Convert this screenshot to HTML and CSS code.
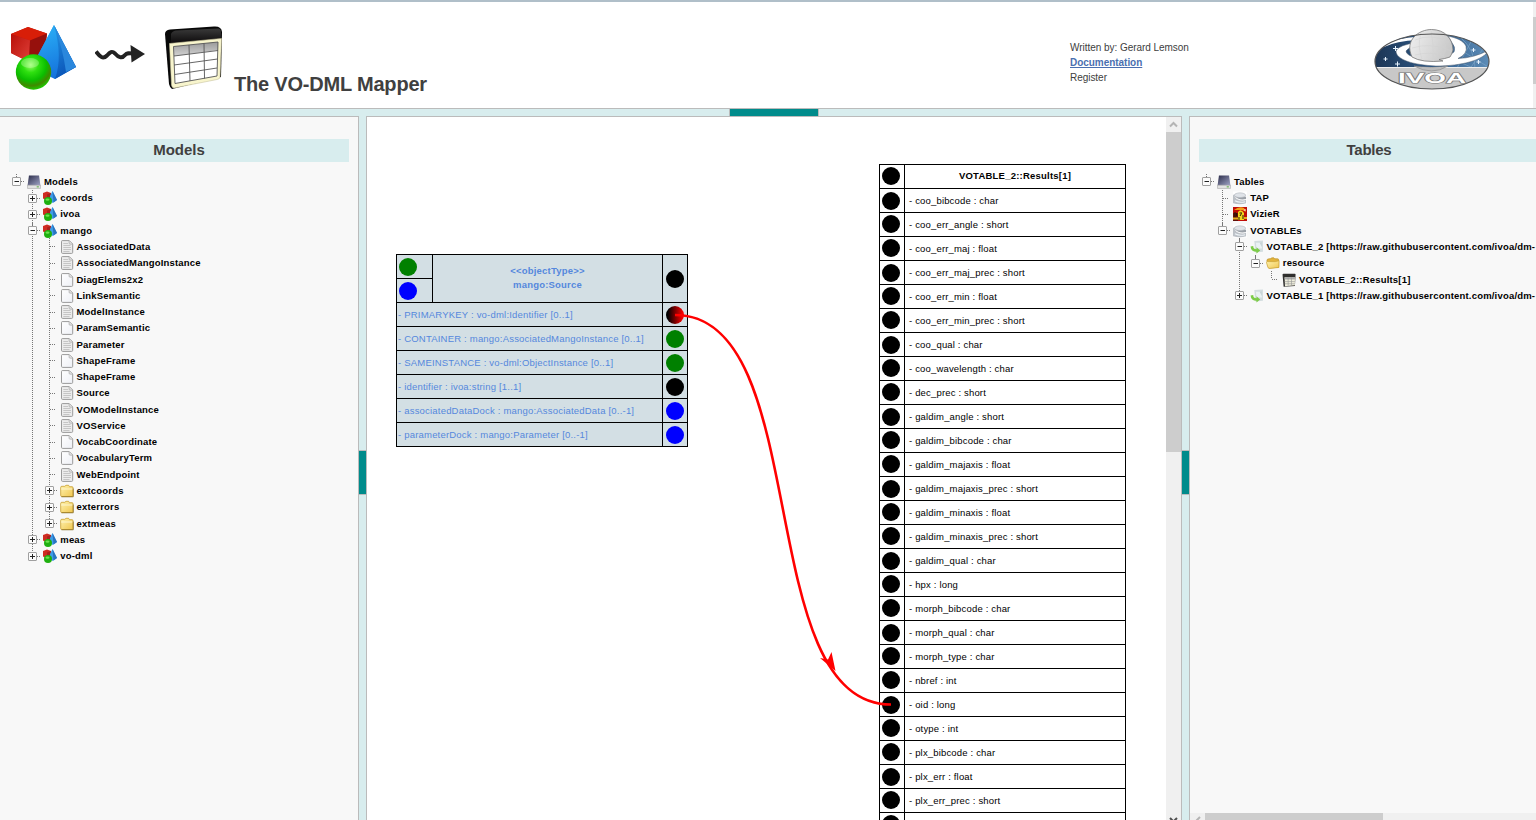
FILE: index.html
```html
<!DOCTYPE html>
<html lang="en">
<head>
<meta charset="utf-8">
<title>The VO-DML Mapper</title>
<link rel="stylesheet" href="styles.css">
</head>
<body>
<svg class="defs" aria-hidden="true">
  <defs>
    <linearGradient id="gBlue" x1="0" y1="0" x2="0.3" y2="1"><stop offset="0" stop-color="#2cb4f8"/><stop offset="1" stop-color="#1573dc"/></linearGradient>
    <linearGradient id="gBlueDark" x1="0" y1="0" x2="0.3" y2="1"><stop offset="0" stop-color="#2396e6"/><stop offset="1" stop-color="#0b55b8"/></linearGradient>
    <linearGradient id="gRed" x1="0" y1="0" x2="1" y2="1"><stop offset="0" stop-color="#b81008"/><stop offset="1" stop-color="#e0403a"/></linearGradient>
    <radialGradient id="gGreen" cx="0.42" cy="0.3" r="0.72"><stop offset="0" stop-color="#9dff70"/><stop offset="0.3" stop-color="#2fe010"/><stop offset="0.62" stop-color="#0bbd00"/><stop offset="0.82" stop-color="#3f8a00"/><stop offset="1" stop-color="#18d400"/></radialGradient>
    <linearGradient id="gFolder" x1="0" y1="0" x2="1" y2="1"><stop offset="0" stop-color="#fff3b0"/><stop offset="1" stop-color="#efc650"/></linearGradient>
    <linearGradient id="gDrive" x1="0" y1="0" x2="1" y2="1"><stop offset="0" stop-color="#2a2c48"/><stop offset="1" stop-color="#a4a8cc"/></linearGradient>
    <linearGradient id="gPage" x1="0" y1="0" x2="1" y2="1"><stop offset="0" stop-color="#ffffff"/><stop offset="1" stop-color="#eef0f6"/></linearGradient>
    <linearGradient id="gHead" x1="0" y1="0" x2="0" y2="1"><stop offset="0" stop-color="#9a9a9a"/><stop offset="1" stop-color="#d2d2d2"/></linearGradient>
    <linearGradient id="gTop" x1="0" y1="0" x2="0" y2="1"><stop offset="0" stop-color="#3a3a3a"/><stop offset="1" stop-color="#0d0b0c"/></linearGradient>
    <linearGradient id="gSky" x1="0" y1="0" x2="1" y2="0"><stop offset="0" stop-color="#1c3554"/><stop offset="0.5" stop-color="#2f5a88"/><stop offset="1" stop-color="#5d8db8"/></linearGradient>
    <linearGradient id="gGlobe" x1="0" y1="0" x2="1" y2="0.3"><stop offset="0" stop-color="#f0f0f0"/><stop offset="1" stop-color="#cacaca"/></linearGradient>
    <clipPath id="logoClip"><ellipse cx="58" cy="33.500" rx="57" ry="27.500"/></clipPath>
    <symbol id="shapes" viewBox="0 0 65 65">
      <path d="M0 9 17 2 36 8.500 33 33 18 37 0 28Z" fill="#c4160e"/>
      <path d="M0 9 17 2 36 8.500 19 15.500Z" fill="#d81e08"/>
      <path d="M0 9 19 15.500 18 37 0 28Z" fill="url(#gRed)"/>
      <path d="M19 15.500 36 8.500 33 33 18 37Z" fill="#96100c"/>
      <path d="M43 0 44 54 27 46V30Z" fill="url(#gBlue)"/>
      <path d="M43 0 65 42 44 54 26 32Z" fill="url(#gBlue)"/>
      <path d="M43 0 65 42 44 54 Q52 32 43 0Z" fill="url(#gBlueDark)"/>
      <path d="M43 0 65 42 55 47 Q52 24 43 0Z" fill="#2a87dc"/>
      <circle cx="22.500" cy="47" r="17.700" fill="url(#gGreen)"/>
      <ellipse cx="19" cy="38" rx="9" ry="5" fill="#d5ffc0" opacity="0.35"/>
    </symbol>
    <symbol id="shapesSmall" viewBox="0 0 14 14">
      <path d="M0 2 4 .5 8 2V8L4 9.500 0 7.500Z" fill="#cf2c22"/>
      <path d="M4 3.500 8 2V8L4 9.500Z" fill="#a8221c"/>
      <path d="M9.500 0 14 9 9.800 12 7 10V5Z" fill="#3d9ce8"/>
      <path d="M9.500 0 14 9 10.500 11.600Z" fill="#2a74c0"/>
      <circle cx="5" cy="10" r="4" fill="#1fb010"/>
      <ellipse cx="4.500" cy="8.600" rx="2" ry="1.200" fill="#6fe050"/>
    </symbol>
    <symbol id="drive" viewBox="0 0 13 13">
      <path d="M1.800 0.500H11.200L12.500 10H0.500Z" fill="url(#gDrive)"/>
      <path d="M0.500 9.500H12.500V12.500H0.500Z" fill="#e4e4e4" stroke="#aaa" stroke-width=".6"/>
      <path d="M9 11h2" stroke="#5fae4a"/>
    </symbol>
    <symbol id="page" viewBox="0 0 13 14">
      <path d="M1.700 .6H8.800L12.200 4V12.300Q12.200 13.400 11.200 13.400H2.200Q1 13.400 1 12.300V1.600Q1 .6 1.700 .6Z" fill="url(#gPage)" stroke="#9a9a9a"/>
      <path d="M8.600 .8V3.200Q8.600 4.200 9.600 4.200H12" fill="#ddd" stroke="#aaa" stroke-width=".7"/>
    </symbol>
    <symbol id="pageText" viewBox="0 0 13 14">
      <path d="M1.700 .6H8.800L12.200 4V12.300Q12.200 13.400 11.200 13.400H2.200Q1 13.400 1 12.300V1.600Q1 .6 1.700 .6Z" fill="#ececec" stroke="#9a9a9a"/>
      <path d="M2.800 3.500H7.500M2.800 5.500H10M2.800 7.500H10.500M2.800 9.500H10.500M2.800 11.500H9" stroke="#bbb" stroke-width=".8"/>
      <path d="M8.600 .8V3.200Q8.600 4.200 9.600 4.200H12" fill="#ddd" stroke="#aaa" stroke-width=".7"/>
    </symbol>
    <symbol id="folder" viewBox="0 0 14 13">
      <path d="M.7 3Q.7 1.800 1.800 1.800H4.800L6 .8H8.600L9.500 2.200H12.200Q13 2.200 13 3.200V11.200Q13 12 12.200 12H1.800Q.7 12 .7 11Z" fill="url(#gFolder)" stroke="#c79d2c" stroke-width=".8"/>
      <path d="M1 4.500H12.500" stroke="#fffbe0" stroke-width=".8"/>
      <path d="M1.500 12.300H13.300V4" fill="none" stroke="#80641c" stroke-width=".7"/>
    </symbol>
    <symbol id="folderOpen" viewBox="0 0 15 13">
      <path d="M1 4Q1 2.500 2 2.300L5 1.800 6.300 1H8.500L9.500 2H12.500Q13.500 2 13.500 3V11L3 12Z" fill="#e3b43c" stroke="#b98d22" stroke-width=".7"/>
      <path d="M.5 6Q.5 5 1.500 5H10L14 4 13.800 11.300 4 12.300Q2.500 12.300 2 11Z" fill="url(#gFolder)" stroke="#c79d2c" stroke-width=".7"/>
    </symbol>
    <symbol id="disk" viewBox="0 0 15 14">
      <path d="M0 0H15V14H0Z" fill="#fff"/>
      <path d="M0 3V12.500Q7.500 15 14 12.500V9Q10 11 4 8Z" fill="#bcc1c7"/>
      <path d="M1 4Q6 10 14 8V5.500Q8 6.500 3 2.500Z" fill="#9ba1a8"/>
      <ellipse cx="7.500" cy="4" rx="6" ry="2.500" fill="#dfe3e8" stroke="#b5bac0" stroke-width=".7"/>
      <path d="M2 10Q7 12.500 13 11" fill="none" stroke="#eef4f8" stroke-width="1.200"/>
    </symbol>
    <symbol id="vizier" viewBox="0 0 14 14">
      <path d="M0 0H14V14H0Z" fill="#c00d08"/>
      <path d="M1 3Q6-1 11 1L13 5 9 3Z" fill="#f5a018"/>
      <path d="M0 6H5V14H0Z" fill="#60100a"/>
      <path d="M5 5Q8 1 11 6V13H5Z" fill="#f2d81c"/>
      <path d="M6.500 6H9M8.500 6.500 7 9M6 10V13M10 8V12M2 5V12M3.500 6V9" fill="none" stroke="#281208"/>
      <path d="M0 11.500H5M11 11H14" stroke="#e8b01c" stroke-width="2"/>
      <path d="M11 3H13" stroke="#fff"/>
    </symbol>
    <symbol id="source" viewBox="0 0 13 13">
      <path d="M4 1 12 .5V11L5 11.500Z" fill="#d3dddf"/>
      <path d="M5.500 2.500H11V8H6Z" fill="#eaf2f3"/>
      <path d="M9 2.500 11 2V6.500Z" fill="#c6d2d4"/>
      <path d="M.5 6 3 5.500Q3 8.500 6 8.500V6.800L9.500 9.800 6 12.500V11Q1 11 .5 6Z" fill="#7ccc48"/>
    </symbol>
    <symbol id="grid" viewBox="0 0 13 13">
      <path d="M.5 1.500Q.5 .7 1.500 .7H12Q12.700 .7 12.600 1.500L12 12 1.500 12.700Z" fill="#302f2e"/>
      <path d="M2.400 4H12V11.400L2.800 12.200Z" fill="#efeedc"/>
      <path d="M2.400 4H12V6H2.400Z" fill="#aaa"/>
      <path d="M5.700 4V12M8.800 4V12M2.500 8H12M2.600 10H12" stroke="#999" stroke-width=".6"/>
    </symbol>
    <symbol id="minus" viewBox="0 0 16 16">
      <path d="M7.500 1V4M12 8.500H15" stroke="#777" stroke-dasharray="1 1"/>
      <rect x="3.500" y="4.500" width="8" height="8" rx=".5" fill="#fbfbfb" stroke="#a0a0a0"/>
      <path d="M5.500 8.500H10" stroke="#222"/>
    </symbol>
    <symbol id="plus" viewBox="0 0 16 16">
      <path d="M12 8.500H15" stroke="#777" stroke-dasharray="1 1"/>
      <rect x="3.500" y="4.500" width="8" height="8" rx=".5" fill="#fbfbfb" stroke="#a0a0a0"/>
      <path d="M5 8.500H10M7.500 6V11" stroke="#222"/>
    </symbol>
    <symbol id="leaf" viewBox="0 0 16 16">
      <path d="M8 8.500H14" stroke="#777" stroke-dasharray="1 1"/>
    </symbol>
  </defs>
</svg>

<div class="app">
  <header class="header">
    <svg class="logo-shapes"><use href="#shapes"/></svg>
    <svg class="logo-arrow" viewBox="0 0 50 20"><path d="M1 7.500C5 13 8 15.500 12 11.500 15 8 17 6.500 20 9.500 23 13 27 15 30 11 32 8.700 34 9 38 9.500" fill="none" stroke="#222" stroke-width="3.900"/><path d="M35.500 1 50 10 36.500 18.500Z" fill="#222"/></svg>
    <svg class="logo-table" viewBox="0 0 60 64">
      <path d="M1 8Q1 4 6 3.500L50 .5Q57.500 0 58 6L57 51 8 63Q6 62 5 58Z" fill="#080808"/>
      <path d="M7 8Q8 5 12 4.500L54 2.500Q57 2.500 57 6V13L7 17Z" fill="url(#gTop)"/>
      <path d="M5.500 17.500 57.500 12.500 56 51Q56 53 53 53.500L10 62Q8 62 7.500 59Z" fill="#f8f5cd" stroke="#c9c5a0" stroke-width=".6"/>
      <path d="M9.500 20.500 54 16 53 50 11 57.500Z" fill="#fff"/>
      <path d="M9.500 20.500 54 16V24L10 30Z" fill="url(#gHead)"/>
      <path d="M9.500 20.500 54 16 53 50 11 57.500ZM25 19 26 55M40 17.500 40.500 52.500M10 30 54 24.500M10 39 53.500 33M10.500 48.500 53 42" fill="none" stroke="#555" stroke-width=".9"/>
    </svg>
    <h1 class="title">The VO-DML Mapper</h1>
    <div class="credits">
      <div>Written by: Gerard Lemson</div>
      <div><a class="doc-link" href="#">Documentation</a></div>
      <div>Register</div>
    </div>
    <svg class="logo-ivoa" viewBox="0 0 116 64">
      <g clip-path="url(#logoClip)">
        <rect width="116" height="64" fill="url(#gSky)"/>
        <path d="M80 18 116 40M76 30 104 42M100 8 82 42M112 16 94 44M85 8Q102 22 101 42" stroke="#82aaca" stroke-width=".6" fill="none"/>
        <rect y="39.500" width="116" height="25" fill="#c8c8c8"/>
        <path d="M0 39.500H116" stroke="#eee"/>
        <path d="M5 19Q20 10 46 8.500L44 12Q22 13 10 19Z" fill="#fff"/>
        <path d="M45 14Q24 17 22 23C22 32 40 37 62 38 88 38 110 32 115 22Q100 30 84 30.500 94 26 92 18C89 12 82 10 74 8L78 15Q82 19 80 24 75 28 66 30L45 30Q32 28 32 23 35 19 41 18Z" fill="#fff" stroke="#46566a" stroke-width=".5"/>
      </g>
      <path d="M40 38Q58 48 74 38Q58 41 40 38Z" fill="#bbb" stroke="#888" stroke-width=".6"/>
      <path d="M38 29C30 12 45 1.500 57.500 1.500 71 1.500 79 11 79 22Q78 26 76 29 70 31 65 31.500L69 33Q48 35 38 29Z" fill="url(#gGlobe)" stroke="#777" stroke-width=".8"/>
      <path d="M41 12Q57 5 75 14M38 20Q57 14 78 23M41 27Q56 23 70 28M47 5Q43 18 48 31M57 2Q60 17 59 32M66 4Q75 17 69 29" fill="none" stroke="#d0d0d0" stroke-width=".5"/>
      <path d="M21.500 18V23M19 20.500H24M11.500 29V33M9.500 31H13.500M23.500 33.500V38.500M21 36H26M99.500 20V24M97.500 22H101.500M104.500 32V36M102.500 34H106.500" stroke="#e8f4ff" stroke-width="1"/>
      <ellipse cx="58" cy="33.500" rx="57" ry="27.500" fill="none" stroke="#555" stroke-width="1.200"/>
      <text x="24" y="55" class="ivoa" textLength="68" lengthAdjust="spacingAndGlyphs">IVOA</text>
    </svg>
    <div class="header-scroll"><div class="header-thumb"></div></div>
  </header>

  <div class="bar-h"><div class="grip-h"></div></div>

  <main class="panes">
    <section class="pane side">
      <h2 class="pane-title">Models</h2>
      <div class="tree">
        <div class="row"><svg class="cell"><use href="#minus"/></svg><svg class="icon"><use href="#drive"/></svg><span>Models</span></div>
        <div class="kids">
          <div class="row"><svg class="cell"><use href="#plus"/></svg><svg class="icon"><use href="#shapesSmall"/></svg><span>coords</span></div>
          <div class="row"><svg class="cell"><use href="#plus"/></svg><svg class="icon"><use href="#shapesSmall"/></svg><span>ivoa</span></div>
          <div class="row"><svg class="cell"><use href="#minus"/></svg><svg class="icon"><use href="#shapesSmall"/></svg><span>mango</span></div>
          <div class="kids">
            <div class="row"><svg class="cell"><use href="#leaf"/></svg><svg class="icon"><use href="#pageText"/></svg><span>AssociatedData</span></div>
            <div class="row"><svg class="cell"><use href="#leaf"/></svg><svg class="icon"><use href="#pageText"/></svg><span>AssociatedMangoInstance</span></div>
            <div class="row"><svg class="cell"><use href="#leaf"/></svg><svg class="icon"><use href="#page"/></svg><span>DiagElems2x2</span></div>
            <div class="row"><svg class="cell"><use href="#leaf"/></svg><svg class="icon"><use href="#page"/></svg><span>LinkSemantic</span></div>
            <div class="row"><svg class="cell"><use href="#leaf"/></svg><svg class="icon"><use href="#pageText"/></svg><span>ModelInstance</span></div>
            <div class="row"><svg class="cell"><use href="#leaf"/></svg><svg class="icon"><use href="#page"/></svg><span>ParamSemantic</span></div>
            <div class="row"><svg class="cell"><use href="#leaf"/></svg><svg class="icon"><use href="#pageText"/></svg><span>Parameter</span></div>
            <div class="row"><svg class="cell"><use href="#leaf"/></svg><svg class="icon"><use href="#page"/></svg><span>ShapeFrame</span></div>
            <div class="row"><svg class="cell"><use href="#leaf"/></svg><svg class="icon"><use href="#page"/></svg><span>ShapeFrame</span></div>
            <div class="row"><svg class="cell"><use href="#leaf"/></svg><svg class="icon"><use href="#pageText"/></svg><span>Source</span></div>
            <div class="row"><svg class="cell"><use href="#leaf"/></svg><svg class="icon"><use href="#pageText"/></svg><span>VOModelInstance</span></div>
            <div class="row"><svg class="cell"><use href="#leaf"/></svg><svg class="icon"><use href="#pageText"/></svg><span>VOService</span></div>
            <div class="row"><svg class="cell"><use href="#leaf"/></svg><svg class="icon"><use href="#page"/></svg><span>VocabCoordinate</span></div>
            <div class="row"><svg class="cell"><use href="#leaf"/></svg><svg class="icon"><use href="#page"/></svg><span>VocabularyTerm</span></div>
            <div class="row"><svg class="cell"><use href="#leaf"/></svg><svg class="icon"><use href="#pageText"/></svg><span>WebEndpoint</span></div>
            <div class="row"><svg class="cell"><use href="#plus"/></svg><svg class="icon"><use href="#folder"/></svg><span>extcoords</span></div>
            <div class="row"><svg class="cell"><use href="#plus"/></svg><svg class="icon"><use href="#folder"/></svg><span>exterrors</span></div>
            <div class="row"><svg class="cell"><use href="#plus"/></svg><svg class="icon"><use href="#folder"/></svg><span>extmeas</span></div>
          </div>
          <div class="row"><svg class="cell"><use href="#plus"/></svg><svg class="icon"><use href="#shapesSmall"/></svg><span>meas</span></div>
          <div class="row"><svg class="cell"><use href="#plus"/></svg><svg class="icon"><use href="#shapesSmall"/></svg><span>vo-dml</span></div>
        </div>
      </div>
    </section>

    <div class="bar-v"><div class="grip-v"></div></div>

    <section class="pane canvas">
      <div class="node object">
        <div class="object-head">
          <div class="ports"><div><i class="dot green"></i></div><div><i class="dot blue"></i></div></div>
          <div class="object-name">&lt;&lt;objectType&gt;&gt;<br>mango:Source</div>
          <div class="port"><i class="dot"></i></div>
        </div>
        <div class="attr"><span>- PRIMARYKEY : vo-dml:Identifier [0..1]</span><div class="port"><i class="dot key"></i></div></div>
        <div class="attr"><span>- CONTAINER : mango:AssociatedMangoInstance [0..1]</span><div class="port"><i class="dot green"></i></div></div>
        <div class="attr"><span>- SAMEINSTANCE : vo-dml:ObjectInstance [0..1]</span><div class="port"><i class="dot green"></i></div></div>
        <div class="attr"><span>- identifier : ivoa:string [1..1]</span><div class="port"><i class="dot"></i></div></div>
        <div class="attr"><span>- associatedDataDock : mango:AssociatedData [0..-1]</span><div class="port"><i class="dot blue"></i></div></div>
        <div class="attr"><span>- parameterDock : mango:Parameter [0..-1]</span><div class="port"><i class="dot blue"></i></div></div>
      </div>

      <div class="node table">
        <div class="col head"><i class="dot"></i><span>VOTABLE_2::Results[1]</span></div>
        <div class="col"><i class="dot"></i><span>- coo_bibcode : char</span></div>
        <div class="col"><i class="dot"></i><span>- coo_err_angle : short</span></div>
        <div class="col"><i class="dot"></i><span>- coo_err_maj : float</span></div>
        <div class="col"><i class="dot"></i><span>- coo_err_maj_prec : short</span></div>
        <div class="col"><i class="dot"></i><span>- coo_err_min : float</span></div>
        <div class="col"><i class="dot"></i><span>- coo_err_min_prec : short</span></div>
        <div class="col"><i class="dot"></i><span>- coo_qual : char</span></div>
        <div class="col"><i class="dot"></i><span>- coo_wavelength : char</span></div>
        <div class="col"><i class="dot"></i><span>- dec_prec : short</span></div>
        <div class="col"><i class="dot"></i><span>- galdim_angle : short</span></div>
        <div class="col"><i class="dot"></i><span>- galdim_bibcode : char</span></div>
        <div class="col"><i class="dot"></i><span>- galdim_majaxis : float</span></div>
        <div class="col"><i class="dot"></i><span>- galdim_majaxis_prec : short</span></div>
        <div class="col"><i class="dot"></i><span>- galdim_minaxis : float</span></div>
        <div class="col"><i class="dot"></i><span>- galdim_minaxis_prec : short</span></div>
        <div class="col"><i class="dot"></i><span>- galdim_qual : char</span></div>
        <div class="col"><i class="dot"></i><span>- hpx : long</span></div>
        <div class="col"><i class="dot"></i><span>- morph_bibcode : char</span></div>
        <div class="col"><i class="dot"></i><span>- morph_qual : char</span></div>
        <div class="col"><i class="dot"></i><span>- morph_type : char</span></div>
        <div class="col"><i class="dot"></i><span>- nbref : int</span></div>
        <div class="col"><i class="dot"></i><span>- oid : long</span></div>
        <div class="col"><i class="dot"></i><span>- otype : int</span></div>
        <div class="col"><i class="dot"></i><span>- plx_bibcode : char</span></div>
        <div class="col"><i class="dot"></i><span>- plx_err : float</span></div>
        <div class="col"><i class="dot"></i><span>- plx_err_prec : short</span></div>
        <div class="col"><i class="dot"></i><span></span></div>
      </div>

      <svg class="link" viewBox="367 117 799 703">
        <path d="M675 315C815 315 751 704.500 891 704.500" fill="none" stroke="#f00" stroke-width="2.600"/>
        <path d="M835.500 671 820 658 828 659.500 831.500 652Z" fill="#f00"/>
      </svg>

      <div class="scroll-v">
        <svg class="arrow-up" viewBox="0 0 15 15"><path d="M4 9.500 7.500 6 11 9.500" fill="none" stroke="#b4b4b4" stroke-width="2"/></svg>
        <div class="thumb-v"></div>
        <svg class="arrow-down" viewBox="0 0 15 3"><path d="M4 1 7.500 4.500 11 1" fill="none" stroke="#505050" stroke-width="2"/></svg>
      </div>
    </section>

    <div class="bar-v"><div class="grip-v"></div></div>

    <section class="pane side right">
      <h2 class="pane-title tables-title">Tables</h2>
      <div class="tree">
        <div class="row"><svg class="cell"><use href="#minus"/></svg><svg class="icon"><use href="#drive"/></svg><span>Tables</span></div>
        <div class="kids sources">
          <div class="row"><svg class="cell"><use href="#leaf"/></svg><svg class="icon"><use href="#disk"/></svg><span>TAP</span></div>
          <div class="row"><svg class="cell"><use href="#leaf"/></svg><svg class="icon"><use href="#vizier"/></svg><span>VizieR</span></div>
          <div class="row"><svg class="cell"><use href="#minus"/></svg><svg class="icon"><use href="#disk"/></svg><span>VOTABLEs</span></div>
          <div class="kids">
            <div class="row"><svg class="cell"><use href="#minus"/></svg><svg class="icon"><use href="#source"/></svg><span>VOTABLE_2 [https://raw.githubusercontent.com/ivoa/dm-</span></div>
            <div class="kids single">
              <div class="row"><svg class="cell"><use href="#minus"/></svg><svg class="icon"><use href="#folderOpen"/></svg><span>resource</span></div>
              <div class="kids">
                <div class="row"><svg class="cell"><use href="#leaf"/></svg><svg class="icon"><use href="#grid"/></svg><span>VOTABLE_2::Results[1]</span></div>
              </div>
            </div>
            <div class="row"><svg class="cell"><use href="#plus"/></svg><svg class="icon"><use href="#source"/></svg><span>VOTABLE_1 [https://raw.githubusercontent.com/ivoa/dm-</span></div>
          </div>
        </div>
      </div>
      <div class="scroll-h">
        <svg class="arrow-left" viewBox="0 0 15 7"><path d="M10 4 6.500 7.500" fill="none" stroke="#b4b4b4" stroke-width="2"/></svg>
        <div class="thumb-h"></div>
      </div>
    </section>
  </main>
</div>
</body>
</html>
```
FILE: styles.css
```css
* { box-sizing: border-box; }
body {
  margin: 0;
  height: 820px;
  overflow: hidden;
  background: #fff;
  color: #404040;
  font-family: "Liberation Sans", Arial, sans-serif;
}
.defs { position: absolute; width: 0; height: 0; }
svg { display: block; flex: none; }
.app { display: flex; flex-direction: column; width: 1536px; height: 820px; }

.header {
  display: flex;
  align-items: flex-start;
  height: 109px;
  border-top: 2px solid #b0bfc9;
  border-bottom: 1px solid #bbb;
  padding-left: 11px;
}
.logo-shapes { width: 65px; height: 65px; margin-top: 23px; }
.logo-arrow { width: 50px; height: 20px; margin: 42px 0 0 19px; }
.logo-table { width: 60px; height: 64px; margin: 24px 0 0 19px; }
.title { width: 836px; margin: 70px 0 0 10px; font-size: 20px; line-height: 24px; letter-spacing: -0.2px; }
.credits { width: 304px; margin-top: 38px; font-size: 10px; line-height: 15px; letter-spacing: -0.04px; white-space: nowrap; }
.doc-link { color: #4a6fb0; font-weight: bold; }
.logo-ivoa { width: 116px; height: 64px; margin-top: 26px; }
.ivoa { font-size: 14px; font-weight: bold; fill: #fff; stroke: #777; stroke-width: 1.2px; paint-order: stroke; }
.header-scroll { align-self: stretch; width: 3px; margin-left: 43px; padding-top: 15px; background: #f0f0f0; }
.header-thumb { height: 67px; background: #cdcdcd; }

.bar-h { height: 7px; padding-left: 729px; background: #d8edee; }
.grip-h { width: 90px; height: 7px; background: #008b8b; border: solid #bbb; border-width: 0 1px; }
.panes { display: flex; height: 704px; background: #d8edee; }
.bar-v { flex: none; width: 7px; padding-top: 334px; }
.grip-v { height: 45px; background: #008b8b; border: solid #bbb; border-width: 1px 0; }
.pane { flex: none; border-top: 1px solid #bbb; overflow: hidden; }
.side { width: 359px; padding-top: 22px; background: #f8f8f8; border-right: 1px solid #bbb; }
.right { display: flex; flex-direction: column; width: 347px; border-right: 0; border-left: 1px solid #bbb; }
.pane-title {
  flex: none;
  width: 340px;
  height: 23px;
  margin: 0 0 11px 9px;
  background: #d8edee;
  font-size: 15px;
  line-height: 22px;
  text-align: center;
}
.tables-title { letter-spacing: -0.25px; }

.tree { padding: 0.3px 0 0 9px; color: #000; font-size: 9.5px; font-weight: bold; letter-spacing: 0.19px; }
.row { display: flex; align-items: center; height: 16.28px; white-space: nowrap; }
.cell { position: relative; z-index: 1; width: 16px; height: 16px; margin-right: 2px; }
.icon { width: 14px; height: 14px; margin: 1px 3px 0 0; }
.kids { position: relative; margin-left: 16.25px; }
.kids::before {
  content: "";
  position: absolute;
  left: 7px;
  top: 0;
  bottom: 8px;
  width: 1px;
  background: repeating-linear-gradient(#777 0 1px, transparent 1px 2px);
}
.sources::before { bottom: 74px; }
.single::before { bottom: 26px; }

.canvas { position: relative; width: 816px; background: #fff; border-left: 1px solid #bbb; border-right: 1px solid #bbb; }
.node { position: absolute; font-size: 9.5px; }
.dot { display: block; flex: none; width: 18px; height: 18px; border-radius: 50%; background: #000; }
.green { background: #008000; }
.blue { background: #00f; }
.key { background: linear-gradient(90deg, #000 10%, #f00 95%); }

.object { left: 29px; top: 137px; width: 292px; border: 1px solid #000; background: #d3dfe4; color: #5588dd; letter-spacing: 0.2px; }
.object-head { display: flex; height: 47px; }
.ports { width: 36px; border-right: 1px solid #000; }
.ports div { height: 24px; padding: 3px 0 0 2px; border-bottom: 1px solid #000; }
.ports div:last-child { border: 0; }
.object-name { flex: 1; padding-top: 9px; font-weight: bold; line-height: 14px; text-align: center; }
.port { display: flex; align-items: center; width: 25px; padding: 1px 0 0 3px; border-left: 1px solid #000; }
.attr { display: flex; height: 24px; border-top: 1px solid #000; line-height: 23px; }
.attr span { flex: 1; padding-left: 1px; white-space: nowrap; }

.table { left: 512px; top: 47px; width: 247px; border: 1px solid #000; color: #000; letter-spacing: 0.17px; }
.col { display: flex; align-items: flex-start; height: 24px; border-bottom: 1px solid #000; padding-left: 2px; }
.col .dot { margin-top: 2px; }
.col:nth-child(3n + 2) .dot { margin-top: 3px; }
.col span { flex: 1; height: 23px; margin-left: 4px; padding-left: 4px; border-left: 1px solid #000; line-height: 23px; }
.col.head span { padding: 0; font-weight: bold; text-align: center; line-height: 21px; letter-spacing: 0.22px; }
.link { position: absolute; left: 0; top: 0; width: 799px; height: 703px; }

.scroll-v {
  position: absolute;
  right: 0;
  top: 0;
  display: flex;
  flex-direction: column;
  width: 15px;
  height: 703px;
  background: #f0f0f0;
}
.arrow-up { width: 15px; height: 15px; }
.thumb-v { height: 320px; background: #cdcdcd; }
.arrow-down { width: 15px; height: 3px; margin-top: auto; }
.scroll-h { display: flex; height: 7px; margin-top: auto; background: #f0f0f0; }
.arrow-left { width: 15px; height: 7px; }
.thumb-h { width: 178px; background: #cdcdcd; }
```
